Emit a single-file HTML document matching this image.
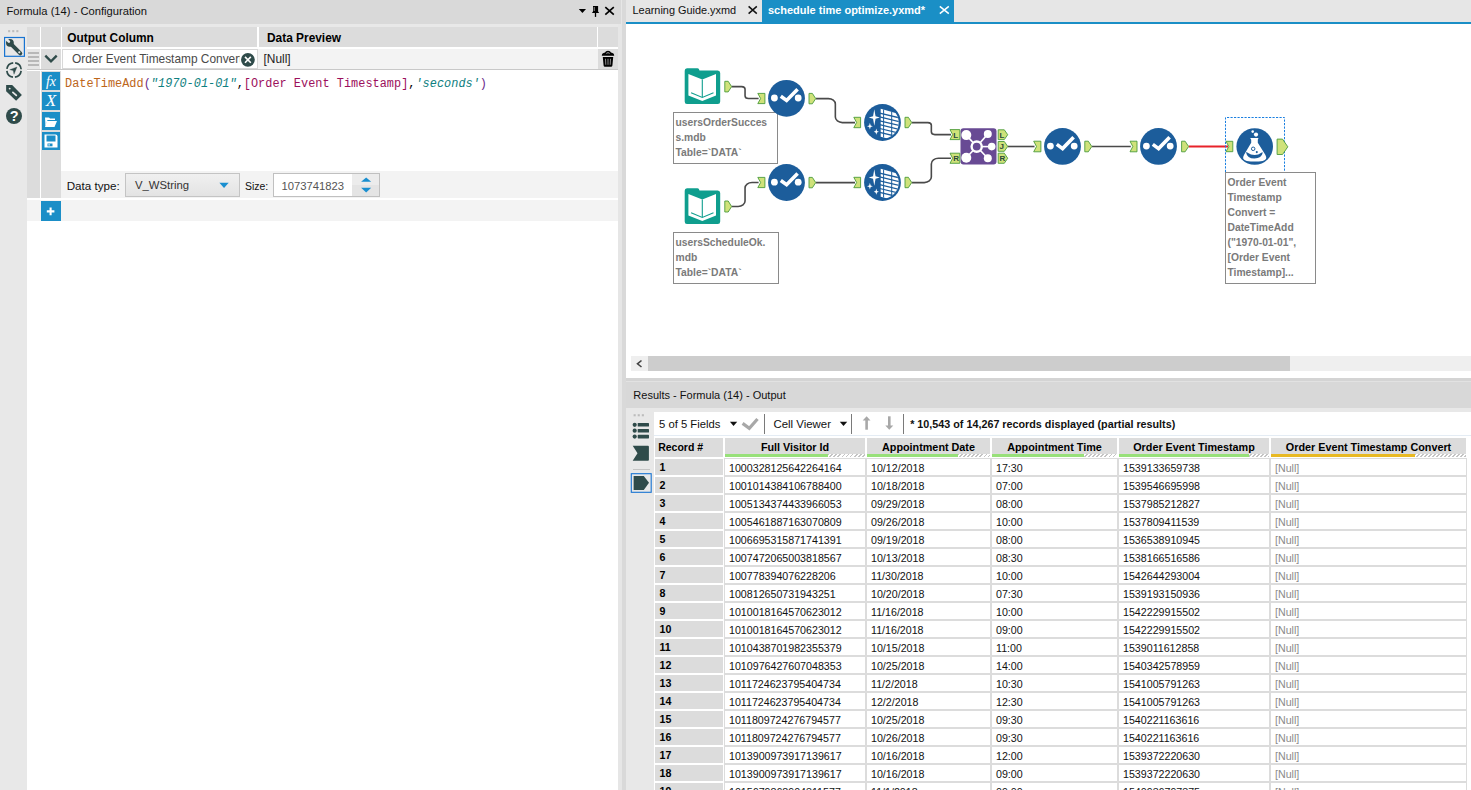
<!DOCTYPE html><html><head><meta charset='utf-8'><style>
*{margin:0;padding:0;box-sizing:border-box}
html,body{width:1471px;height:790px;overflow:hidden;background:#fff;font-family:"Liberation Sans",sans-serif;color:#000}
.a{position:absolute}
.t{position:absolute;white-space:nowrap;line-height:1}
</style></head><body><div class="a" style="left:0px;top:0px;width:621px;height:24px;background:#d9d9d9;"></div>
<div class="t" style="left:6.5px;top:6px;font-size:11.2px;color:#111">Formula (14) - Configuration</div>
<div class="a" style="left:0px;top:24px;width:618px;height:766px;background:#fff;"></div>
<div class="a" style="left:0px;top:24px;width:27px;height:766px;background:#e8e8e8;"></div>
<div class="a" style="left:27px;top:24px;width:591px;height:3px;background:#e8e8e8;"></div>
<div class="a" style="left:618px;top:24px;width:4px;height:766px;background:#e6e6e6;"></div>
<div class="a" style="left:621px;top:0px;width:1px;height:24px;background:#e6e6e6;"></div>
<div class="a" style="left:622px;top:0px;width:4px;height:790px;background:#d9d9d9;"></div>
<div class="a" style="left:27px;top:27px;width:13px;height:20px;background:#dcdcdc;"></div>
<div class="a" style="left:41px;top:27px;width:20px;height:20px;background:#dcdcdc;"></div>
<div class="a" style="left:62px;top:27px;width:195px;height:20px;background:#dcdcdc;"></div>
<div class="a" style="left:259px;top:27px;width:338px;height:20px;background:#dcdcdc;"></div>
<div class="a" style="left:598px;top:27px;width:20px;height:20px;background:#dcdcdc;"></div>
<div class="t" style="left:67.3px;top:33px;font-size:11.9px;font-weight:bold">Output Column</div>
<div class="t" style="left:267px;top:33px;font-size:11.9px;font-weight:bold">Data Preview</div>
<div class="a" style="left:27px;top:49px;width:13px;height:20px;background:#e6e6e6;"></div>
<div class="a" style="left:28px;top:52px;width:11px;height:2px;background:#b8b8b8;"></div>
<div class="a" style="left:28px;top:56px;width:11px;height:2px;background:#b8b8b8;"></div>
<div class="a" style="left:28px;top:60px;width:11px;height:2px;background:#b8b8b8;"></div>
<div class="a" style="left:28px;top:64px;width:11px;height:2px;background:#b8b8b8;"></div>
<div class="a" style="left:41px;top:49px;width:20px;height:20px;background:#dcdcdc;"></div>
<div class="a" style="left:62px;top:49px;width:196px;height:20px;background:#d8d8d8;"></div>
<div class="a" style="left:63px;top:50px;width:194px;height:18px;background:#fff;"></div>
<div class="t" style="left:72px;top:54px;font-size:11.9px;color:#4a4a4a;width:168px;overflow:hidden">Order Event Timestamp Convert</div>
<div class="a" style="left:258px;top:49px;width:340px;height:20px;background:#f3f3f3;"></div>
<div class="t" style="left:263.5px;top:54px;font-size:11.9px;color:#222">[Null]</div>
<div class="a" style="left:598px;top:49px;width:20px;height:20px;background:#dcdcdc;"></div>
<div class="a" style="left:27px;top:69px;width:591px;height:1px;background:#c8c8c8;"></div>
<div class="a" style="left:27px;top:71px;width:13px;height:127px;background:#dcdcdc;"></div>
<div class="a" style="left:41px;top:71px;width:20px;height:127px;background:#dcdcdc;"></div>
<div class="a" style="left:42px;top:72px;width:18px;height:18px;background:#1b8ec7;"></div>
<div class="a" style="left:42px;top:92px;width:18px;height:18px;background:#1b8ec7;"></div>
<div class="a" style="left:42px;top:112px;width:18px;height:18px;background:#1b8ec7;"></div>
<div class="a" style="left:42px;top:132px;width:18px;height:18px;background:#1b8ec7;"></div>
<div class="t" style="left:65px;top:79px;font-family:'Liberation Mono',monospace;font-size:11.86px;letter-spacing:0.035px"><span style="color:#bd661a">DateTimeAdd</span><span style="color:#6b2a8a">(</span><span style="color:#0e8080;font-style:italic">"1970-01-01"</span><span style="color:#000">,</span><span style="color:#9c0f5c">[Order Event Timestamp]</span><span style="color:#000">,</span><span style="color:#0e8080;font-style:italic">'seconds'</span><span style="color:#6b2a8a">)</span></div>
<div class="a" style="left:61px;top:171px;width:557px;height:27px;background:#f3f3f3;"></div>
<div class="t" style="left:66.7px;top:180px;font-size:11.63px;color:#111">Data type:</div>
<div class="a" style="left:125px;top:173px;width:115px;height:24px;background:#c4c4c4;"></div>
<div class="a" style="left:126px;top:174px;width:113px;height:22px;background:linear-gradient(#f0f0f0,#e3e3e3);"></div>
<div class="t" style="left:135px;top:180px;font-size:11.3px;color:#333">V_WString</div>
<div class="t" style="left:245px;top:182px;font-size:10.44px;color:#111">Size:</div>
<div class="a" style="left:273px;top:173px;width:107px;height:24px;background:#c0c0c0;"></div>
<div class="a" style="left:274px;top:174px;width:78px;height:22px;background:#fff;"></div>
<div class="a" style="left:352px;top:174px;width:27px;height:11px;background:#ececec;"></div>
<div class="a" style="left:352px;top:185px;width:27px;height:11px;background:#e4e4e4;"></div>
<div class="t" style="left:281.4px;top:181px;font-size:11.26px;color:#555">1073741823</div>
<div class="a" style="left:27px;top:200px;width:591px;height:21px;background:#f3f3f3;"></div>
<div class="a" style="left:41px;top:201px;width:20px;height:20px;background:#1b8ec7;"></div>
<div class="a" style="left:626px;top:0px;width:845px;height:22px;background:#e6e6e6;"></div>
<div class="t" style="left:632.5px;top:5px;font-size:10.91px;color:#111">Learning Guide.yxmd</div>
<div class="a" style="left:762px;top:0px;width:192px;height:22px;background:#1a8fc6;"></div>
<div class="t" style="left:768px;top:5px;font-size:11px;color:#fff;font-weight:bold">schedule time optimize.yxmd*</div>
<div class="a" style="left:626px;top:22px;width:845px;height:2px;background:#1a8fc6;"></div>
<div class="a" style="left:626px;top:24px;width:845px;height:354px;background:#fff;"></div>
<div class="a" style="left:631px;top:356px;width:840px;height:15px;background:#efefef;"></div>
<div class="a" style="left:648px;top:356px;width:642px;height:15px;background:#cdcdcd;"></div>
<div class="a" style="left:626px;top:378px;width:845px;height:3px;background:#d4d4d4;"></div>
<div class="a" style="left:626px;top:381px;width:845px;height:1px;background:#e2e2e2;"></div>
<div class="a" style="left:626px;top:382px;width:845px;height:26px;background:#d8d8d8;"></div>
<div class="t" style="left:633.3px;top:390px;font-size:11.02px;color:#111">Results - Formula (14) - Output</div>
<div class="a" style="left:626px;top:408px;width:845px;height:382px;background:#e8e8e8;"></div>
<div class="a" style="left:654px;top:412px;width:817px;height:378px;background:#fff;"></div>
<div class="a" style="left:654px;top:435px;width:817px;height:1px;background:#e4ecf4;"></div>
<div class="t" style="left:659px;top:419px;font-size:11.27px;color:#111">5 of 5 Fields</div>
<div class="t" style="left:773.4px;top:419px;font-size:11.43px;color:#111">Cell Viewer</div>
<div class="t" style="left:910.2px;top:419px;font-size:10.78px;font-weight:bold;color:#111">* 10,543 of 14,267 records displayed (partial results)</div>
<div class="a" style="left:764px;top:414px;width:1px;height:20px;background:#7a7a7a;"></div>
<div class="a" style="left:851px;top:414px;width:1px;height:20px;background:#7a7a7a;"></div>
<div class="a" style="left:903px;top:414px;width:1px;height:20px;background:#7a7a7a;"></div>
<div class="a" style="left:655px;top:438px;width:68px;height:19px;background:#dcdcdc;"></div>
<div class="t" style="left:658.2px;top:442px;font-size:10.5px;font-weight:bold">Record #</div>
<div class="a" style="left:725px;top:438px;width:140px;height:19px;background:#dcdcdc;"></div>
<div class="t" style="left:725px;width:140px;text-align:center;top:442px;font-size:10.8px;font-weight:bold">Full Visitor Id</div>
<div class="a" style="left:725px;top:454px;width:140px;height:3px;background:repeating-linear-gradient(135deg,#fff 0px,#fff 1.5px,#c4c4c4 1.5px,#c4c4c4 2.85px);"></div>
<div class="a" style="left:725px;top:454px;width:103px;height:3px;background:#98e07a;"></div>
<div class="a" style="left:867px;top:438px;width:123px;height:19px;background:#dcdcdc;"></div>
<div class="t" style="left:867px;width:123px;text-align:center;top:442px;font-size:10.8px;font-weight:bold">Appointment Date</div>
<div class="a" style="left:867px;top:454px;width:123px;height:3px;background:repeating-linear-gradient(135deg,#fff 0px,#fff 1.5px,#c4c4c4 1.5px,#c4c4c4 2.85px);"></div>
<div class="a" style="left:867px;top:454px;width:91px;height:3px;background:#98e07a;"></div>
<div class="a" style="left:992px;top:438px;width:125px;height:19px;background:#dcdcdc;"></div>
<div class="t" style="left:992px;width:125px;text-align:center;top:442px;font-size:10.8px;font-weight:bold">Appointment Time</div>
<div class="a" style="left:992px;top:454px;width:125px;height:3px;background:repeating-linear-gradient(135deg,#fff 0px,#fff 1.5px,#c4c4c4 1.5px,#c4c4c4 2.85px);"></div>
<div class="a" style="left:992px;top:454px;width:92px;height:3px;background:#98e07a;"></div>
<div class="a" style="left:1119px;top:438px;width:150px;height:19px;background:#dcdcdc;"></div>
<div class="t" style="left:1119px;width:150px;text-align:center;top:442px;font-size:10.8px;font-weight:bold">Order Event Timestamp</div>
<div class="a" style="left:1119px;top:454px;width:150px;height:3px;background:repeating-linear-gradient(135deg,#fff 0px,#fff 1.5px,#c4c4c4 1.5px,#c4c4c4 2.85px);"></div>
<div class="a" style="left:1119px;top:454px;width:130px;height:3px;background:#98e07a;"></div>
<div class="a" style="left:1271px;top:438px;width:195px;height:19px;background:#dcdcdc;"></div>
<div class="t" style="left:1271px;width:195px;text-align:center;top:442px;font-size:10.8px;font-weight:bold">Order Event Timestamp Convert</div>
<div class="a" style="left:1271px;top:454px;width:195px;height:3px;background:repeating-linear-gradient(135deg,#fff 0px,#fff 1.5px,#c4c4c4 1.5px,#c4c4c4 2.85px);"></div>
<div class="a" style="left:1271px;top:454px;width:144px;height:3px;background:#e8b923;"></div>
<div class="a" style="left:724px;top:458px;width:743px;height:332px;background:#dcdcdc;"></div>
<div class="a" style="left:655px;top:459px;width:68px;height:16px;background:#dcdcdc;"></div>
<div class="t" style="left:659.5px;top:462px;font-size:10.66px;font-weight:bold">1</div>
<div class="a" style="left:725px;top:459px;width:140px;height:16px;background:#fff;"></div>
<div class="t" style="left:729px;top:463px;font-size:10.66px;color:#111">1000328125642264164</div>
<div class="a" style="left:867px;top:459px;width:123px;height:16px;background:#fff;"></div>
<div class="t" style="left:871px;top:463px;font-size:10.66px;color:#111">10/12/2018</div>
<div class="a" style="left:992px;top:459px;width:125px;height:16px;background:#fff;"></div>
<div class="t" style="left:996px;top:463px;font-size:10.66px;color:#111">17:30</div>
<div class="a" style="left:1119px;top:459px;width:150px;height:16px;background:#fff;"></div>
<div class="t" style="left:1123px;top:463px;font-size:10.66px;color:#111">1539133659738</div>
<div class="a" style="left:1271px;top:459px;width:195px;height:16px;background:#fff;"></div>
<div class="t" style="left:1275px;top:463px;font-size:10.66px;color:#8a8a8a">[Null]</div>
<div class="a" style="left:655px;top:477px;width:68px;height:16px;background:#dcdcdc;"></div>
<div class="t" style="left:659.5px;top:480px;font-size:10.66px;font-weight:bold">2</div>
<div class="a" style="left:725px;top:477px;width:140px;height:16px;background:#fff;"></div>
<div class="t" style="left:729px;top:481px;font-size:10.66px;color:#111">1001014384106788400</div>
<div class="a" style="left:867px;top:477px;width:123px;height:16px;background:#fff;"></div>
<div class="t" style="left:871px;top:481px;font-size:10.66px;color:#111">10/18/2018</div>
<div class="a" style="left:992px;top:477px;width:125px;height:16px;background:#fff;"></div>
<div class="t" style="left:996px;top:481px;font-size:10.66px;color:#111">07:00</div>
<div class="a" style="left:1119px;top:477px;width:150px;height:16px;background:#fff;"></div>
<div class="t" style="left:1123px;top:481px;font-size:10.66px;color:#111">1539546695998</div>
<div class="a" style="left:1271px;top:477px;width:195px;height:16px;background:#fff;"></div>
<div class="t" style="left:1275px;top:481px;font-size:10.66px;color:#8a8a8a">[Null]</div>
<div class="a" style="left:655px;top:495px;width:68px;height:16px;background:#dcdcdc;"></div>
<div class="t" style="left:659.5px;top:498px;font-size:10.66px;font-weight:bold">3</div>
<div class="a" style="left:725px;top:495px;width:140px;height:16px;background:#fff;"></div>
<div class="t" style="left:729px;top:499px;font-size:10.66px;color:#111">1005134374433966053</div>
<div class="a" style="left:867px;top:495px;width:123px;height:16px;background:#fff;"></div>
<div class="t" style="left:871px;top:499px;font-size:10.66px;color:#111">09/29/2018</div>
<div class="a" style="left:992px;top:495px;width:125px;height:16px;background:#fff;"></div>
<div class="t" style="left:996px;top:499px;font-size:10.66px;color:#111">08:00</div>
<div class="a" style="left:1119px;top:495px;width:150px;height:16px;background:#fff;"></div>
<div class="t" style="left:1123px;top:499px;font-size:10.66px;color:#111">1537985212827</div>
<div class="a" style="left:1271px;top:495px;width:195px;height:16px;background:#fff;"></div>
<div class="t" style="left:1275px;top:499px;font-size:10.66px;color:#8a8a8a">[Null]</div>
<div class="a" style="left:655px;top:513px;width:68px;height:16px;background:#dcdcdc;"></div>
<div class="t" style="left:659.5px;top:516px;font-size:10.66px;font-weight:bold">4</div>
<div class="a" style="left:725px;top:513px;width:140px;height:16px;background:#fff;"></div>
<div class="t" style="left:729px;top:517px;font-size:10.66px;color:#111">1005461887163070809</div>
<div class="a" style="left:867px;top:513px;width:123px;height:16px;background:#fff;"></div>
<div class="t" style="left:871px;top:517px;font-size:10.66px;color:#111">09/26/2018</div>
<div class="a" style="left:992px;top:513px;width:125px;height:16px;background:#fff;"></div>
<div class="t" style="left:996px;top:517px;font-size:10.66px;color:#111">10:00</div>
<div class="a" style="left:1119px;top:513px;width:150px;height:16px;background:#fff;"></div>
<div class="t" style="left:1123px;top:517px;font-size:10.66px;color:#111">1537809411539</div>
<div class="a" style="left:1271px;top:513px;width:195px;height:16px;background:#fff;"></div>
<div class="t" style="left:1275px;top:517px;font-size:10.66px;color:#8a8a8a">[Null]</div>
<div class="a" style="left:655px;top:531px;width:68px;height:16px;background:#dcdcdc;"></div>
<div class="t" style="left:659.5px;top:534px;font-size:10.66px;font-weight:bold">5</div>
<div class="a" style="left:725px;top:531px;width:140px;height:16px;background:#fff;"></div>
<div class="t" style="left:729px;top:535px;font-size:10.66px;color:#111">1006695315871741391</div>
<div class="a" style="left:867px;top:531px;width:123px;height:16px;background:#fff;"></div>
<div class="t" style="left:871px;top:535px;font-size:10.66px;color:#111">09/19/2018</div>
<div class="a" style="left:992px;top:531px;width:125px;height:16px;background:#fff;"></div>
<div class="t" style="left:996px;top:535px;font-size:10.66px;color:#111">08:00</div>
<div class="a" style="left:1119px;top:531px;width:150px;height:16px;background:#fff;"></div>
<div class="t" style="left:1123px;top:535px;font-size:10.66px;color:#111">1536538910945</div>
<div class="a" style="left:1271px;top:531px;width:195px;height:16px;background:#fff;"></div>
<div class="t" style="left:1275px;top:535px;font-size:10.66px;color:#8a8a8a">[Null]</div>
<div class="a" style="left:655px;top:549px;width:68px;height:16px;background:#dcdcdc;"></div>
<div class="t" style="left:659.5px;top:552px;font-size:10.66px;font-weight:bold">6</div>
<div class="a" style="left:725px;top:549px;width:140px;height:16px;background:#fff;"></div>
<div class="t" style="left:729px;top:553px;font-size:10.66px;color:#111">1007472065003818567</div>
<div class="a" style="left:867px;top:549px;width:123px;height:16px;background:#fff;"></div>
<div class="t" style="left:871px;top:553px;font-size:10.66px;color:#111">10/13/2018</div>
<div class="a" style="left:992px;top:549px;width:125px;height:16px;background:#fff;"></div>
<div class="t" style="left:996px;top:553px;font-size:10.66px;color:#111">08:30</div>
<div class="a" style="left:1119px;top:549px;width:150px;height:16px;background:#fff;"></div>
<div class="t" style="left:1123px;top:553px;font-size:10.66px;color:#111">1538166516586</div>
<div class="a" style="left:1271px;top:549px;width:195px;height:16px;background:#fff;"></div>
<div class="t" style="left:1275px;top:553px;font-size:10.66px;color:#8a8a8a">[Null]</div>
<div class="a" style="left:655px;top:567px;width:68px;height:16px;background:#dcdcdc;"></div>
<div class="t" style="left:659.5px;top:570px;font-size:10.66px;font-weight:bold">7</div>
<div class="a" style="left:725px;top:567px;width:140px;height:16px;background:#fff;"></div>
<div class="t" style="left:729px;top:571px;font-size:10.66px;color:#111">100778394076228206</div>
<div class="a" style="left:867px;top:567px;width:123px;height:16px;background:#fff;"></div>
<div class="t" style="left:871px;top:571px;font-size:10.66px;color:#111">11/30/2018</div>
<div class="a" style="left:992px;top:567px;width:125px;height:16px;background:#fff;"></div>
<div class="t" style="left:996px;top:571px;font-size:10.66px;color:#111">10:00</div>
<div class="a" style="left:1119px;top:567px;width:150px;height:16px;background:#fff;"></div>
<div class="t" style="left:1123px;top:571px;font-size:10.66px;color:#111">1542644293004</div>
<div class="a" style="left:1271px;top:567px;width:195px;height:16px;background:#fff;"></div>
<div class="t" style="left:1275px;top:571px;font-size:10.66px;color:#8a8a8a">[Null]</div>
<div class="a" style="left:655px;top:585px;width:68px;height:16px;background:#dcdcdc;"></div>
<div class="t" style="left:659.5px;top:588px;font-size:10.66px;font-weight:bold">8</div>
<div class="a" style="left:725px;top:585px;width:140px;height:16px;background:#fff;"></div>
<div class="t" style="left:729px;top:589px;font-size:10.66px;color:#111">100812650731943251</div>
<div class="a" style="left:867px;top:585px;width:123px;height:16px;background:#fff;"></div>
<div class="t" style="left:871px;top:589px;font-size:10.66px;color:#111">10/20/2018</div>
<div class="a" style="left:992px;top:585px;width:125px;height:16px;background:#fff;"></div>
<div class="t" style="left:996px;top:589px;font-size:10.66px;color:#111">07:30</div>
<div class="a" style="left:1119px;top:585px;width:150px;height:16px;background:#fff;"></div>
<div class="t" style="left:1123px;top:589px;font-size:10.66px;color:#111">1539193150936</div>
<div class="a" style="left:1271px;top:585px;width:195px;height:16px;background:#fff;"></div>
<div class="t" style="left:1275px;top:589px;font-size:10.66px;color:#8a8a8a">[Null]</div>
<div class="a" style="left:655px;top:603px;width:68px;height:16px;background:#dcdcdc;"></div>
<div class="t" style="left:659.5px;top:606px;font-size:10.66px;font-weight:bold">9</div>
<div class="a" style="left:725px;top:603px;width:140px;height:16px;background:#fff;"></div>
<div class="t" style="left:729px;top:607px;font-size:10.66px;color:#111">1010018164570623012</div>
<div class="a" style="left:867px;top:603px;width:123px;height:16px;background:#fff;"></div>
<div class="t" style="left:871px;top:607px;font-size:10.66px;color:#111">11/16/2018</div>
<div class="a" style="left:992px;top:603px;width:125px;height:16px;background:#fff;"></div>
<div class="t" style="left:996px;top:607px;font-size:10.66px;color:#111">10:00</div>
<div class="a" style="left:1119px;top:603px;width:150px;height:16px;background:#fff;"></div>
<div class="t" style="left:1123px;top:607px;font-size:10.66px;color:#111">1542229915502</div>
<div class="a" style="left:1271px;top:603px;width:195px;height:16px;background:#fff;"></div>
<div class="t" style="left:1275px;top:607px;font-size:10.66px;color:#8a8a8a">[Null]</div>
<div class="a" style="left:655px;top:621px;width:68px;height:16px;background:#dcdcdc;"></div>
<div class="t" style="left:659.5px;top:624px;font-size:10.66px;font-weight:bold">10</div>
<div class="a" style="left:725px;top:621px;width:140px;height:16px;background:#fff;"></div>
<div class="t" style="left:729px;top:625px;font-size:10.66px;color:#111">1010018164570623012</div>
<div class="a" style="left:867px;top:621px;width:123px;height:16px;background:#fff;"></div>
<div class="t" style="left:871px;top:625px;font-size:10.66px;color:#111">11/16/2018</div>
<div class="a" style="left:992px;top:621px;width:125px;height:16px;background:#fff;"></div>
<div class="t" style="left:996px;top:625px;font-size:10.66px;color:#111">09:00</div>
<div class="a" style="left:1119px;top:621px;width:150px;height:16px;background:#fff;"></div>
<div class="t" style="left:1123px;top:625px;font-size:10.66px;color:#111">1542229915502</div>
<div class="a" style="left:1271px;top:621px;width:195px;height:16px;background:#fff;"></div>
<div class="t" style="left:1275px;top:625px;font-size:10.66px;color:#8a8a8a">[Null]</div>
<div class="a" style="left:655px;top:639px;width:68px;height:16px;background:#dcdcdc;"></div>
<div class="t" style="left:659.5px;top:642px;font-size:10.66px;font-weight:bold">11</div>
<div class="a" style="left:725px;top:639px;width:140px;height:16px;background:#fff;"></div>
<div class="t" style="left:729px;top:643px;font-size:10.66px;color:#111">1010438701982355379</div>
<div class="a" style="left:867px;top:639px;width:123px;height:16px;background:#fff;"></div>
<div class="t" style="left:871px;top:643px;font-size:10.66px;color:#111">10/15/2018</div>
<div class="a" style="left:992px;top:639px;width:125px;height:16px;background:#fff;"></div>
<div class="t" style="left:996px;top:643px;font-size:10.66px;color:#111">11:00</div>
<div class="a" style="left:1119px;top:639px;width:150px;height:16px;background:#fff;"></div>
<div class="t" style="left:1123px;top:643px;font-size:10.66px;color:#111">1539011612858</div>
<div class="a" style="left:1271px;top:639px;width:195px;height:16px;background:#fff;"></div>
<div class="t" style="left:1275px;top:643px;font-size:10.66px;color:#8a8a8a">[Null]</div>
<div class="a" style="left:655px;top:657px;width:68px;height:16px;background:#dcdcdc;"></div>
<div class="t" style="left:659.5px;top:660px;font-size:10.66px;font-weight:bold">12</div>
<div class="a" style="left:725px;top:657px;width:140px;height:16px;background:#fff;"></div>
<div class="t" style="left:729px;top:661px;font-size:10.66px;color:#111">1010976427607048353</div>
<div class="a" style="left:867px;top:657px;width:123px;height:16px;background:#fff;"></div>
<div class="t" style="left:871px;top:661px;font-size:10.66px;color:#111">10/25/2018</div>
<div class="a" style="left:992px;top:657px;width:125px;height:16px;background:#fff;"></div>
<div class="t" style="left:996px;top:661px;font-size:10.66px;color:#111">14:00</div>
<div class="a" style="left:1119px;top:657px;width:150px;height:16px;background:#fff;"></div>
<div class="t" style="left:1123px;top:661px;font-size:10.66px;color:#111">1540342578959</div>
<div class="a" style="left:1271px;top:657px;width:195px;height:16px;background:#fff;"></div>
<div class="t" style="left:1275px;top:661px;font-size:10.66px;color:#8a8a8a">[Null]</div>
<div class="a" style="left:655px;top:675px;width:68px;height:16px;background:#dcdcdc;"></div>
<div class="t" style="left:659.5px;top:678px;font-size:10.66px;font-weight:bold">13</div>
<div class="a" style="left:725px;top:675px;width:140px;height:16px;background:#fff;"></div>
<div class="t" style="left:729px;top:679px;font-size:10.66px;color:#111">1011724623795404734</div>
<div class="a" style="left:867px;top:675px;width:123px;height:16px;background:#fff;"></div>
<div class="t" style="left:871px;top:679px;font-size:10.66px;color:#111">11/2/2018</div>
<div class="a" style="left:992px;top:675px;width:125px;height:16px;background:#fff;"></div>
<div class="t" style="left:996px;top:679px;font-size:10.66px;color:#111">10:30</div>
<div class="a" style="left:1119px;top:675px;width:150px;height:16px;background:#fff;"></div>
<div class="t" style="left:1123px;top:679px;font-size:10.66px;color:#111">1541005791263</div>
<div class="a" style="left:1271px;top:675px;width:195px;height:16px;background:#fff;"></div>
<div class="t" style="left:1275px;top:679px;font-size:10.66px;color:#8a8a8a">[Null]</div>
<div class="a" style="left:655px;top:693px;width:68px;height:16px;background:#dcdcdc;"></div>
<div class="t" style="left:659.5px;top:696px;font-size:10.66px;font-weight:bold">14</div>
<div class="a" style="left:725px;top:693px;width:140px;height:16px;background:#fff;"></div>
<div class="t" style="left:729px;top:697px;font-size:10.66px;color:#111">1011724623795404734</div>
<div class="a" style="left:867px;top:693px;width:123px;height:16px;background:#fff;"></div>
<div class="t" style="left:871px;top:697px;font-size:10.66px;color:#111">12/2/2018</div>
<div class="a" style="left:992px;top:693px;width:125px;height:16px;background:#fff;"></div>
<div class="t" style="left:996px;top:697px;font-size:10.66px;color:#111">12:30</div>
<div class="a" style="left:1119px;top:693px;width:150px;height:16px;background:#fff;"></div>
<div class="t" style="left:1123px;top:697px;font-size:10.66px;color:#111">1541005791263</div>
<div class="a" style="left:1271px;top:693px;width:195px;height:16px;background:#fff;"></div>
<div class="t" style="left:1275px;top:697px;font-size:10.66px;color:#8a8a8a">[Null]</div>
<div class="a" style="left:655px;top:711px;width:68px;height:16px;background:#dcdcdc;"></div>
<div class="t" style="left:659.5px;top:714px;font-size:10.66px;font-weight:bold">15</div>
<div class="a" style="left:725px;top:711px;width:140px;height:16px;background:#fff;"></div>
<div class="t" style="left:729px;top:715px;font-size:10.66px;color:#111">1011809724276794577</div>
<div class="a" style="left:867px;top:711px;width:123px;height:16px;background:#fff;"></div>
<div class="t" style="left:871px;top:715px;font-size:10.66px;color:#111">10/25/2018</div>
<div class="a" style="left:992px;top:711px;width:125px;height:16px;background:#fff;"></div>
<div class="t" style="left:996px;top:715px;font-size:10.66px;color:#111">09:30</div>
<div class="a" style="left:1119px;top:711px;width:150px;height:16px;background:#fff;"></div>
<div class="t" style="left:1123px;top:715px;font-size:10.66px;color:#111">1540221163616</div>
<div class="a" style="left:1271px;top:711px;width:195px;height:16px;background:#fff;"></div>
<div class="t" style="left:1275px;top:715px;font-size:10.66px;color:#8a8a8a">[Null]</div>
<div class="a" style="left:655px;top:729px;width:68px;height:16px;background:#dcdcdc;"></div>
<div class="t" style="left:659.5px;top:732px;font-size:10.66px;font-weight:bold">16</div>
<div class="a" style="left:725px;top:729px;width:140px;height:16px;background:#fff;"></div>
<div class="t" style="left:729px;top:733px;font-size:10.66px;color:#111">1011809724276794577</div>
<div class="a" style="left:867px;top:729px;width:123px;height:16px;background:#fff;"></div>
<div class="t" style="left:871px;top:733px;font-size:10.66px;color:#111">10/26/2018</div>
<div class="a" style="left:992px;top:729px;width:125px;height:16px;background:#fff;"></div>
<div class="t" style="left:996px;top:733px;font-size:10.66px;color:#111">09:30</div>
<div class="a" style="left:1119px;top:729px;width:150px;height:16px;background:#fff;"></div>
<div class="t" style="left:1123px;top:733px;font-size:10.66px;color:#111">1540221163616</div>
<div class="a" style="left:1271px;top:729px;width:195px;height:16px;background:#fff;"></div>
<div class="t" style="left:1275px;top:733px;font-size:10.66px;color:#8a8a8a">[Null]</div>
<div class="a" style="left:655px;top:747px;width:68px;height:16px;background:#dcdcdc;"></div>
<div class="t" style="left:659.5px;top:750px;font-size:10.66px;font-weight:bold">17</div>
<div class="a" style="left:725px;top:747px;width:140px;height:16px;background:#fff;"></div>
<div class="t" style="left:729px;top:751px;font-size:10.66px;color:#111">1013900973917139617</div>
<div class="a" style="left:867px;top:747px;width:123px;height:16px;background:#fff;"></div>
<div class="t" style="left:871px;top:751px;font-size:10.66px;color:#111">10/16/2018</div>
<div class="a" style="left:992px;top:747px;width:125px;height:16px;background:#fff;"></div>
<div class="t" style="left:996px;top:751px;font-size:10.66px;color:#111">12:00</div>
<div class="a" style="left:1119px;top:747px;width:150px;height:16px;background:#fff;"></div>
<div class="t" style="left:1123px;top:751px;font-size:10.66px;color:#111">1539372220630</div>
<div class="a" style="left:1271px;top:747px;width:195px;height:16px;background:#fff;"></div>
<div class="t" style="left:1275px;top:751px;font-size:10.66px;color:#8a8a8a">[Null]</div>
<div class="a" style="left:655px;top:765px;width:68px;height:16px;background:#dcdcdc;"></div>
<div class="t" style="left:659.5px;top:768px;font-size:10.66px;font-weight:bold">18</div>
<div class="a" style="left:725px;top:765px;width:140px;height:16px;background:#fff;"></div>
<div class="t" style="left:729px;top:769px;font-size:10.66px;color:#111">1013900973917139617</div>
<div class="a" style="left:867px;top:765px;width:123px;height:16px;background:#fff;"></div>
<div class="t" style="left:871px;top:769px;font-size:10.66px;color:#111">10/16/2018</div>
<div class="a" style="left:992px;top:765px;width:125px;height:16px;background:#fff;"></div>
<div class="t" style="left:996px;top:769px;font-size:10.66px;color:#111">09:00</div>
<div class="a" style="left:1119px;top:765px;width:150px;height:16px;background:#fff;"></div>
<div class="t" style="left:1123px;top:769px;font-size:10.66px;color:#111">1539372220630</div>
<div class="a" style="left:1271px;top:765px;width:195px;height:16px;background:#fff;"></div>
<div class="t" style="left:1275px;top:769px;font-size:10.66px;color:#8a8a8a">[Null]</div>
<div class="a" style="left:655px;top:783px;width:68px;height:16px;background:#dcdcdc;"></div>
<div class="t" style="left:659.5px;top:786px;font-size:10.66px;font-weight:bold">19</div>
<div class="a" style="left:725px;top:783px;width:140px;height:16px;background:#fff;"></div>
<div class="t" style="left:729px;top:787px;font-size:10.66px;color:#111">1015679868904311577</div>
<div class="a" style="left:867px;top:783px;width:123px;height:16px;background:#fff;"></div>
<div class="t" style="left:871px;top:787px;font-size:10.66px;color:#111">11/1/2018</div>
<div class="a" style="left:992px;top:783px;width:125px;height:16px;background:#fff;"></div>
<div class="t" style="left:996px;top:787px;font-size:10.66px;color:#111">09:00</div>
<div class="a" style="left:1119px;top:783px;width:150px;height:16px;background:#fff;"></div>
<div class="t" style="left:1123px;top:787px;font-size:10.66px;color:#111">1540936797375</div>
<div class="a" style="left:1271px;top:783px;width:195px;height:16px;background:#fff;"></div>
<div class="t" style="left:1275px;top:787px;font-size:10.66px;color:#8a8a8a">[Null]</div>
<div class="a" style="left:673px;top:112px;width:105px;height:52px;border:1px solid #8a8a8a;background:#fff"></div>
<div class="t" style="left:675.5px;top:118px;font-size:10.3px;font-weight:bold;color:#7a7a7a">usersOrderSucces</div>
<div class="t" style="left:675.5px;top:133px;font-size:10.3px;font-weight:bold;color:#7a7a7a">s.mdb</div>
<div class="t" style="left:675.5px;top:148px;font-size:10.3px;font-weight:bold;color:#7a7a7a">Table=`DATA`</div>
<div class="a" style="left:673px;top:232px;width:106px;height:52px;border:1px solid #8a8a8a;background:#fff"></div>
<div class="t" style="left:675.5px;top:238px;font-size:10.3px;font-weight:bold;color:#7a7a7a">usersScheduleOk.</div>
<div class="t" style="left:675.5px;top:253px;font-size:10.3px;font-weight:bold;color:#7a7a7a">mdb</div>
<div class="t" style="left:675.5px;top:268px;font-size:10.3px;font-weight:bold;color:#7a7a7a">Table=`DATA`</div>
<div class="a" style="left:1225px;top:172px;width:91px;height:112px;border:1px solid #8a8a8a;background:#fff"></div>
<div class="t" style="left:1227.5px;top:178px;font-size:10.3px;font-weight:bold;color:#7a7a7a">Order Event</div>
<div class="t" style="left:1227.5px;top:193px;font-size:10.3px;font-weight:bold;color:#7a7a7a">Timestamp</div>
<div class="t" style="left:1227.5px;top:208px;font-size:10.3px;font-weight:bold;color:#7a7a7a">Convert =</div>
<div class="t" style="left:1227.5px;top:223px;font-size:10.3px;font-weight:bold;color:#7a7a7a">DateTimeAdd</div>
<div class="t" style="left:1227.5px;top:238px;font-size:10.3px;font-weight:bold;color:#7a7a7a">("1970-01-01",</div>
<div class="t" style="left:1227.5px;top:253px;font-size:10.3px;font-weight:bold;color:#7a7a7a">[Order Event</div>
<div class="t" style="left:1227.5px;top:268px;font-size:10.3px;font-weight:bold;color:#7a7a7a">Timestamp]...</div>
<svg class="a" style="left:0;top:0" width="1471" height="790" viewBox="0 0 1471 790"><path d="M731.5,86.6 L741.5989999999999,86.6 C743.49705,86.6 745.05,87.83165 745.05,89.33699999999999 L745.05,95.763 C745.05,97.26835 746.60295,98.5 748.501,98.5 L758.6,98.5" stroke="#4a4a4a" stroke-width="1.6" fill="none"/><path d="M815.7,98.6 L828.39,98.6 C832.218,98.6 835.35,101.08399999999999 835.35,104.11999999999999 L835.35,117.08 C835.35,120.116 838.482,122.6 842.3100000000001,122.6 L855,122.6" stroke="#4a4a4a" stroke-width="1.6" fill="none"/><path d="M911.7,122.6 L927.87,122.6 C929.784,122.6 931.35,123.842 931.35,125.36 L931.35,131.84 C931.35,133.358 932.916,134.6 934.83,134.6 L951,134.6" stroke="#4a4a4a" stroke-width="1.6" fill="none"/><path d="M731.5,206.5 L738.0899999999999,206.5 C741.9179999999999,206.5 745.05,204.016 745.05,200.98 L745.05,188.02 C745.05,184.984 748.1819999999999,182.5 752.01,182.5 L758.6,182.5" stroke="#4a4a4a" stroke-width="1.6" fill="none"/><path d="M815.7,182.6 L855,182.6" stroke="#4a4a4a" stroke-width="1.6" fill="none"/><path d="M911.7,182.6 L924.303,182.6 C928.17885,182.6 931.35,180.08495 931.35,177.011 L931.35,163.889 C931.35,160.81505 934.52115,158.3 938.397,158.3 L951,158.3" stroke="#4a4a4a" stroke-width="1.6" fill="none"/><path d="M1007.6,146.5 L1034.5,146.5" stroke="#4a4a4a" stroke-width="1.6" fill="none"/><path d="M1091.8,146.5 L1130.8,146.5" stroke="#4a4a4a" stroke-width="1.6" fill="none"/><path d="M1188.6,146.5 L1228,146.5" stroke="#e8232a" stroke-width="2" fill="none"/><path d="M684.7,70.7 Q684.7,68.2 687.0,68.2 L697.5,68.2 Q699.0,68.2 699.5,70.5 L717.8,70.5 Q720.2,70.5 720.2,73.0 L720.2,101.6 Q720.2,104.1 717.8,104.1 L687.0,104.1 Q684.7,104.1 684.7,101.6 Z" fill="#0f9e8e"/><path d="M688.4,74.0 L702.3,79.5 L716.0,74.0 L716.0,95.4 L702.3,101.0 L688.4,95.4 Z" fill="#fff"/><path d="M702.3,79.5 L702.3,97.0" stroke="#0f9e8e" stroke-width="1.1"/><path d="M691.1,92.7 L702.3,97.4 L713.5,92.7" stroke="#0f9e8e" stroke-width="1.1" fill="none"/><path d="M684.7,190.7 Q684.7,188.2 687.0,188.2 L697.5,188.2 Q699.0,188.2 699.5,190.5 L717.8,190.5 Q720.2,190.5 720.2,193.0 L720.2,221.6 Q720.2,224.1 717.8,224.1 L687.0,224.1 Q684.7,224.1 684.7,221.6 Z" fill="#0f9e8e"/><path d="M688.4,194.0 L702.3,199.5 L716.0,194.0 L716.0,215.39999999999998 L702.3,221.0 L688.4,215.39999999999998 Z" fill="#fff"/><path d="M702.3,199.5 L702.3,217.0" stroke="#0f9e8e" stroke-width="1.1"/><path d="M691.1,212.7 L702.3,217.39999999999998 L713.5,212.7" stroke="#0f9e8e" stroke-width="1.1" fill="none"/><path d="M724.8,81.3 L728.2,81.3 L731.6,86.6 L728.2,91.9 L724.8,91.9 Z" fill="#cfe27a" stroke="#4c9c3c" stroke-width="0.9"/><path d="M724.8,201 L728.2,201 L731.6,206.5 L728.2,212 L724.8,212 Z" fill="#cfe27a" stroke="#4c9c3c" stroke-width="0.9"/><circle cx="786.5" cy="98.3" r="18.4" fill="#1c5d9b"/><circle cx="774.4" cy="98.0" r="3.4" fill="#fff"/><circle cx="798.2" cy="98.0" r="3.4" fill="#fff"/><path d="M780.8,96.3 L786.6,100.5 L797.6,89.2" stroke="#fff" stroke-width="3.6" fill="none" stroke-linejoin="miter"/><path d="M757.8,93.4 L764.9,93.4 L764.9,103.6 L757.8,103.6 L760.5999999999999,98.5 Z" fill="#cfe27a" stroke="#4c9c3c" stroke-width="0.9"/><path d="M809,93.4 L812.35,93.4 L815.7,98.6 L812.35,103.8 L809,103.8 Z" fill="#cfe27a" stroke="#4c9c3c" stroke-width="0.9"/><circle cx="786.5" cy="182.5" r="18.4" fill="#1c5d9b"/><circle cx="774.4" cy="182.2" r="3.4" fill="#fff"/><circle cx="798.2" cy="182.2" r="3.4" fill="#fff"/><path d="M780.8,180.5 L786.6,184.7 L797.6,173.4" stroke="#fff" stroke-width="3.6" fill="none" stroke-linejoin="miter"/><path d="M757.8,177.4 L764.9,177.4 L764.9,187.6 L757.8,187.6 L760.5999999999999,182.5 Z" fill="#cfe27a" stroke="#4c9c3c" stroke-width="0.9"/><path d="M809,177.4 L812.35,177.4 L815.7,182.60000000000002 L812.35,187.8 L809,187.8 Z" fill="#cfe27a" stroke="#4c9c3c" stroke-width="0.9"/><circle cx="882.5" cy="122.5" r="18.4" fill="#1c5d9b"/><path d="M874.3,109.2 L875.55,116.25 L879.9,117.5 L875.55,118.75 L874.3,125.8 L873.05,118.75 L868.6999999999999,117.5 L873.05,116.25 Z" fill="#fff"/><path d="M869.9,122.8 L870.65,125.45 L872.8,126.2 L870.65,126.95 L869.9,129.6 L869.15,126.95 L867.0,126.2 L869.15,125.45 Z" fill="#fff"/><path d="M876.3,128.6 L877.0,131.0 L878.9,131.7 L877.0,132.39999999999998 L876.3,134.79999999999998 L875.5999999999999,132.39999999999998 L873.6999999999999,131.7 L875.5999999999999,131.0 Z" fill="#fff"/><clipPath id="c1"><circle cx="882.5" cy="122.5" r="16.2"/></clipPath><g clip-path="url(#c1)"><path d="M880.7,108.7 L902.5,115.0 L902.5,142.5 L880.7,136.7 Z" fill="#fff"/><path d="M879.7,113.1 L902.5,118.6" stroke="#1c5d9b" stroke-width="1.25"/><path d="M879.7,116.94999999999999 L902.5,122.44999999999999" stroke="#1c5d9b" stroke-width="1.25"/><path d="M879.7,120.8 L902.5,126.3" stroke="#1c5d9b" stroke-width="1.25"/><path d="M879.7,124.64999999999999 L902.5,130.14999999999998" stroke="#1c5d9b" stroke-width="1.25"/><path d="M879.7,128.5 L902.5,134.0" stroke="#1c5d9b" stroke-width="1.25"/><path d="M879.7,132.35 L902.5,137.85" stroke="#1c5d9b" stroke-width="1.25"/><path d="M883.6,109.5 L883.6,137.5" stroke="#1c5d9b" stroke-width="1"/><path d="M891.7,111.5 L891.7,137.5" stroke="#1c5d9b" stroke-width="1"/></g><path d="M853.8,117.3 L860.6,117.3 L860.6,127.7 L853.8,127.7 L856.5999999999999,122.5 Z" fill="#cfe27a" stroke="#4c9c3c" stroke-width="0.9"/><path d="M905,117.3 L908.35,117.3 L911.7,122.5 L908.35,127.7 L905,127.7 Z" fill="#cfe27a" stroke="#4c9c3c" stroke-width="0.9"/><circle cx="882.5" cy="182.5" r="18.4" fill="#1c5d9b"/><path d="M874.3,169.2 L875.55,176.25 L879.9,177.5 L875.55,178.75 L874.3,185.8 L873.05,178.75 L868.6999999999999,177.5 L873.05,176.25 Z" fill="#fff"/><path d="M869.9,182.79999999999998 L870.65,185.45 L872.8,186.2 L870.65,186.95 L869.9,189.6 L869.15,186.95 L867.0,186.2 L869.15,185.45 Z" fill="#fff"/><path d="M876.3,188.6 L877.0,191.0 L878.9,191.7 L877.0,192.39999999999998 L876.3,194.79999999999998 L875.5999999999999,192.39999999999998 L873.6999999999999,191.7 L875.5999999999999,191.0 Z" fill="#fff"/><clipPath id="c2"><circle cx="882.5" cy="182.5" r="16.2"/></clipPath><g clip-path="url(#c2)"><path d="M880.7,168.7 L902.5,175.0 L902.5,202.5 L880.7,196.7 Z" fill="#fff"/><path d="M879.7,173.1 L902.5,178.6" stroke="#1c5d9b" stroke-width="1.25"/><path d="M879.7,176.95 L902.5,182.45" stroke="#1c5d9b" stroke-width="1.25"/><path d="M879.7,180.79999999999998 L902.5,186.29999999999998" stroke="#1c5d9b" stroke-width="1.25"/><path d="M879.7,184.65 L902.5,190.15" stroke="#1c5d9b" stroke-width="1.25"/><path d="M879.7,188.5 L902.5,194.0" stroke="#1c5d9b" stroke-width="1.25"/><path d="M879.7,192.35 L902.5,197.85" stroke="#1c5d9b" stroke-width="1.25"/><path d="M883.6,169.5 L883.6,197.5" stroke="#1c5d9b" stroke-width="1"/><path d="M891.7,171.5 L891.7,197.5" stroke="#1c5d9b" stroke-width="1"/></g><path d="M853.8,177.3 L860.6,177.3 L860.6,187.7 L853.8,187.7 L856.5999999999999,182.5 Z" fill="#cfe27a" stroke="#4c9c3c" stroke-width="0.9"/><path d="M905,177.3 L908.35,177.3 L911.7,182.5 L908.35,187.7 L905,187.7 Z" fill="#cfe27a" stroke="#4c9c3c" stroke-width="0.9"/><rect x="960.5" y="128.2" width="36" height="36.2" rx="3" fill="#684a94"/><path d="M976.7,146.6 L966.3,135.1" stroke="#fff" stroke-width="1.6"/><path d="M976.7,146.6 L966.3,157.7" stroke="#fff" stroke-width="1.6"/><path d="M976.7,146.6 L987.8,134.0" stroke="#fff" stroke-width="1.6"/><path d="M976.7,146.6 L991.7,146.6" stroke="#fff" stroke-width="1.6"/><path d="M976.7,146.6 L987.8,158.29999999999998" stroke="#fff" stroke-width="1.6"/><circle cx="966.3" cy="135.1" r="5" fill="#fff"/><circle cx="966.3" cy="157.7" r="5" fill="#fff"/><circle cx="987.8" cy="134.0" r="4" fill="#fff"/><circle cx="991.7" cy="146.6" r="3.8" fill="#fff"/><circle cx="987.8" cy="158.29999999999998" r="4" fill="#fff"/><circle cx="976.7" cy="146.6" r="5.1" fill="#684a94" stroke="#fff" stroke-width="2.4"/><path d="M950,129.6 L959.8,129.6 L959.8,139.6 L950,139.6 L952.6,134.6 Z" fill="#cfe27a" stroke="#4c9c3c" stroke-width="0.9"/><text x="953.2" y="137.6" font-family="Liberation Sans" font-weight="bold" font-size="8" fill="#2a4a3a">L</text><path d="M950,153.2 L959.8,153.2 L959.8,163.3 L950,163.3 L952.6,158.25 Z" fill="#cfe27a" stroke="#4c9c3c" stroke-width="0.9"/><text x="953.2" y="161.25" font-family="Liberation Sans" font-weight="bold" font-size="8" fill="#2a4a3a">R</text><path d="M998.2,129.8 L1004.3000000000001,129.8 L1007.7,134.7 L1004.3000000000001,139.6 L998.2,139.6 Z" fill="#cfe27a" stroke="#4c9c3c" stroke-width="0.9"/><text x="999.4000000000001" y="137.7" font-family="Liberation Sans" font-weight="bold" font-size="8" fill="#2a4a3a">L</text><path d="M998.2,141.5 L1004.3000000000001,141.5 L1007.7,146.4 L1004.3000000000001,151.3 L998.2,151.3 Z" fill="#cfe27a" stroke="#4c9c3c" stroke-width="0.9"/><text x="999.4000000000001" y="149.4" font-family="Liberation Sans" font-weight="bold" font-size="8" fill="#2a4a3a">J</text><path d="M998.2,153.2 L1004.3000000000001,153.2 L1007.7,158.25 L1004.3000000000001,163.3 L998.2,163.3 Z" fill="#cfe27a" stroke="#4c9c3c" stroke-width="0.9"/><text x="999.4000000000001" y="161.25" font-family="Liberation Sans" font-weight="bold" font-size="8" fill="#2a4a3a">R</text><circle cx="1062.5" cy="146.4" r="18.4" fill="#1c5d9b"/><circle cx="1050.4" cy="146.1" r="3.4" fill="#fff"/><circle cx="1074.2" cy="146.1" r="3.4" fill="#fff"/><path d="M1056.8,144.4 L1062.6,148.6 L1073.6,137.3" stroke="#fff" stroke-width="3.6" fill="none" stroke-linejoin="miter"/><path d="M1033.7,141.2 L1040.9,141.2 L1040.9,151.8 L1033.7,151.8 L1036.5,146.5 Z" fill="#cfe27a" stroke="#4c9c3c" stroke-width="0.9"/><path d="M1084.8,141.2 L1088.3,141.2 L1091.8,146.5 L1088.3,151.8 L1084.8,151.8 Z" fill="#cfe27a" stroke="#4c9c3c" stroke-width="0.9"/><circle cx="1158.5" cy="146.4" r="18.4" fill="#1c5d9b"/><circle cx="1146.4" cy="146.1" r="3.4" fill="#fff"/><circle cx="1170.2" cy="146.1" r="3.4" fill="#fff"/><path d="M1152.8,144.4 L1158.6,148.6 L1169.6,137.3" stroke="#fff" stroke-width="3.6" fill="none" stroke-linejoin="miter"/><path d="M1130,141.2 L1137,141.2 L1137,151.8 L1130,151.8 L1132.8,146.5 Z" fill="#cfe27a" stroke="#4c9c3c" stroke-width="0.9"/><path d="M1181.6,141.2 L1185.1,141.2 L1188.6,146.5 L1185.1,151.8 L1181.6,151.8 Z" fill="#cfe27a" stroke="#4c9c3c" stroke-width="0.9"/><path d="M1225.5,172 L1225.5,117.5 L1284.5,117.5 L1284.5,172" fill="none" stroke="#1a7fe0" stroke-width="1" stroke-dasharray="2.2,1.3"/><circle cx="1254.7" cy="146.5" r="18.3" fill="#1c5d9b"/><path d="M1250.2,137.9 L1258.5,137.9 L1257.8,139.7 L1257.8,142.7 L1265.3,154.7 Q1268.2,159.7 1262.7,160.9 Q1254.7,162.1 1246.7,160.9 Q1241.2,159.7 1244.1000000000001,154.7 L1251.2,142.7 L1251.2,139.7 Z" fill="#fff"/><path d="M1246.1000000000001,152.4 Q1246.5,151.8 1247.3,152.4 Q1254.7,157.4 1261.8,152.4 Q1262.7,151.8 1262.7,152.8 Q1261.7,158.5 1254.4,158.5 Q1247.1000000000001,158.5 1246.1000000000001,152.4 Z" fill="#1c5d9b"/><circle cx="1252.7" cy="131.6" r="1.3" fill="#fff"/><circle cx="1256.0" cy="134.6" r="2.1" fill="#fff"/><circle cx="1253.2" cy="148.8" r="1.75" fill="none" stroke="#1c5d9b" stroke-width="1"/><circle cx="1256.8" cy="152.1" r="1.05" fill="#1c5d9b"/><path d="M1226,141.3 L1232.8,141.3 L1232.8,151.7 L1226,151.7 L1228.8,146.5 Z" fill="#cfe27a" stroke="#4c9c3c" stroke-width="0.9"/><path d="M1277.1,139.1 L1282.5,139.1 L1287.8,146.8 L1282.5,154.5 L1277.1,154.5 Z" fill="#cfe27a" stroke="#4c9c3c" stroke-width="0.9"/><path d="M578.8,9.1 L586,9.1 L582.4,12.9 Z" fill="#000"/><path d="M593,5.9 L598.1,5.9 L598.1,11.6 L599.2,12.9 L591.9,12.9 L593,11.6 Z" fill="#000"/><path d="M595.5,12.5 L595.5,16.9" stroke="#000" stroke-width="1.3"/><path d="M594.2,7 L594.2,11" stroke="#d9d9d9" stroke-width="0.7"/><path d="M605.3,7.2 L613.8,14.7 M613.8,7.2 L605.3,14.7" stroke="#000" stroke-width="1.7"/><path d="M748.6,6.4 L756.8,13.6 M756.8,6.4 L748.6,13.6" stroke="#111" stroke-width="1.5"/><path d="M939.8,6.4 L948.8,13.6 M948.8,6.4 L939.8,13.6" stroke="#fff" stroke-width="1.5"/><rect x="8.1" y="30.1" width="2.1" height="2.1" fill="#bcbcbc"/><rect x="12.2" y="30.1" width="2.1" height="2.1" fill="#bcbcbc"/><rect x="16.3" y="30.1" width="2.1" height="2.1" fill="#bcbcbc"/><rect x="4.6" y="37.5" width="19.8" height="18.8" fill="none" stroke="#1874d2" stroke-width="1.2"/><g fill="#2f4b4a"><path d="M11.6,44.6 L20.3,53.3" stroke="#2f4b4a" stroke-width="4" stroke-linecap="round"/><circle cx="9.9" cy="42.8" r="3.9"/></g><path d="M8.9,41.7 L6.6,39.4" stroke="#e8e8e8" stroke-width="2.6" stroke-linecap="round"/><circle cx="19.3" cy="52.3" r="1.1" fill="#e8e8e8"/><circle cx="14" cy="70" r="7.2" fill="none" stroke="#2f4b4a" stroke-width="1.7" stroke-dasharray="9.3,2" stroke-dashoffset="-1" transform="rotate(0 14 70)"/><path d="M17,67 L9.7,69.7 L13.2,70.6 L14,74.3 Z" fill="#2f4b4a" stroke="#2f4b4a" stroke-width="0.3" stroke-linejoin="round"/><path d="M6.1,85.1 L12.2,85.1 L21.9,95.1 L16.1,100.8 L6.1,91.2 Z" fill="#2f4b4a"/><circle cx="9.7" cy="88.6" r="0.95" fill="#e8e8e8"/><path d="M12.9,92.4 L16.3,95.4" stroke="#e8e8e8" stroke-width="1.8" stroke-linecap="round"/><circle cx="14" cy="116" r="8" fill="#2f4b4a"/><text x="14.2" y="121.3" text-anchor="middle" font-family="Liberation Sans" font-size="14.5" font-weight="bold" fill="#fff">?</text><path d="M45.3,55.6 L51,61.3 L56.7,55.6" stroke="#2f4b4a" stroke-width="2.3" fill="none"/><circle cx="247.9" cy="59.8" r="6.9" fill="#2f4b4a"/><path d="M245,56.9 L250.8,62.7 M250.8,56.9 L245,62.7" stroke="#fff" stroke-width="1.6"/><path d="M601.8,55.8 Q601.8,53.2 605,52.6 Q605.6,50.8 608,50.8 Q610.4,50.8 611,52.6 Q614.2,53.2 614.2,55.8 Z" fill="#000"/><path d="M606.3,53.4 Q608,51.9 609.7,53.4" stroke="#bbb" stroke-width="0.9" fill="none"/><path d="M602.8,57 L613.2,57 L612.4,65.4 Q612.3,66.7 611,66.7 L605,66.7 Q603.7,66.7 603.6,65.4 Z" fill="#000"/><path d="M605.5,58.8 L605.8,64.8 M608,58.8 L608,64.8 M610.5,58.8 L610.2,64.8" stroke="#999" stroke-width="0.9"/><text x="51" y="86" text-anchor="middle" font-family="Liberation Serif" font-style="italic" font-size="14" fill="#fff">fx</text><text x="51" y="106" text-anchor="middle" font-family="Liberation Serif" font-style="italic" font-size="17" fill="#fff">X</text><path d="M45,117.5 L49,117.5 L50,118.5 L55,118.5 L55,120 L47.5,120 L45.5,126 Z" fill="#fff"/><path d="M46.8,121 L57,121 L54.5,127 L45,127 Z" fill="#fff"/><path d="M44.5,134.5 L55.5,134.5 Q57.5,134.5 57.5,136.5 L57.5,147.5 L44.5,147.5 Z" fill="#fff"/><rect x="46.5" y="135.5" width="9" height="6" fill="#1b8ec7"/><rect x="47.5" y="143.5" width="5" height="2.8" fill="#1b8ec7"/><rect x="48.4" y="144.3" width="1.4" height="1.2" fill="#fff"/><path d="M50.6,207.6 L50.6,215.2 M46.8,211.4 L54.4,211.4" stroke="#fff" stroke-width="2.1"/><path d="M219.4,182.8 L228.7,182.8 L224.05,188.1 Z" fill="#1a8fd0"/><path d="M361.1,181.8 L371.2,181.8 L366.15,177.4 Z" fill="#1a8fd0"/><path d="M361.1,187.8 L371.2,187.8 L366.15,192.5 Z" fill="#1a8fd0"/><rect x="633.6" y="414.2" width="2.1" height="2.1" fill="#bcbcbc"/><rect x="637.7" y="414.2" width="2.1" height="2.1" fill="#bcbcbc"/><rect x="641.8" y="414.2" width="2.1" height="2.1" fill="#bcbcbc"/><circle cx="634.7" cy="424.8" r="2.1" fill="#2f4b4a"/><rect x="637.7" y="423.0" width="11.3" height="3.6" rx="0.6" fill="#2f4b4a"/><circle cx="634.7" cy="430.7" r="2.1" fill="#2f4b4a"/><rect x="637.7" y="428.9" width="11.3" height="3.6" rx="0.6" fill="#2f4b4a"/><circle cx="634.7" cy="436.6" r="2.1" fill="#2f4b4a"/><rect x="637.7" y="434.8" width="11.3" height="3.6" rx="0.6" fill="#2f4b4a"/><path d="M632.7,445.8 L648,445.8 Q648.9,445.8 648.9,446.7 L648.9,460 Q648.9,460.8 648,460.8 L632.7,460.8 L637.5,453.3 Z" fill="#2f4b4a"/><rect x="633" y="469" width="17" height="1" fill="#c4c4c4"/><rect x="631.3" y="473.7" width="19.9" height="18.6" fill="none" stroke="#1874d2" stroke-width="1.1"/><path d="M633.6,476 L643.8,476 L649,482.8 L643.8,490 L633.6,490 Z" fill="#2f4b4a"/><path d="M729.9,421.8 L737.2,421.8 L733.55,426 Z" fill="#111"/><path d="M839.8,421.8 L847.2,421.8 L843.5,426 Z" fill="#111"/><path d="M742.6,423.4 L749.3,428.3 L757.5,419" stroke="#a8a8a8" stroke-width="3.2" fill="none"/><path d="M866.6,420 L866.6,429.7" stroke="#a8a8a8" stroke-width="2.6"/><path d="M862.7,420.6 L866.6,416.3 L870.5,420.6 Z" fill="#a8a8a8"/><path d="M889.3,416.3 L889.3,426" stroke="#a8a8a8" stroke-width="2.6"/><path d="M885.3,425.4 L889.3,429.7 L893.3,425.4 Z" fill="#a8a8a8"/><path d="M641.5,360.5 L637.5,363.8 L641.5,367" stroke="#444" stroke-width="1.6" fill="none"/></svg></body></html>
